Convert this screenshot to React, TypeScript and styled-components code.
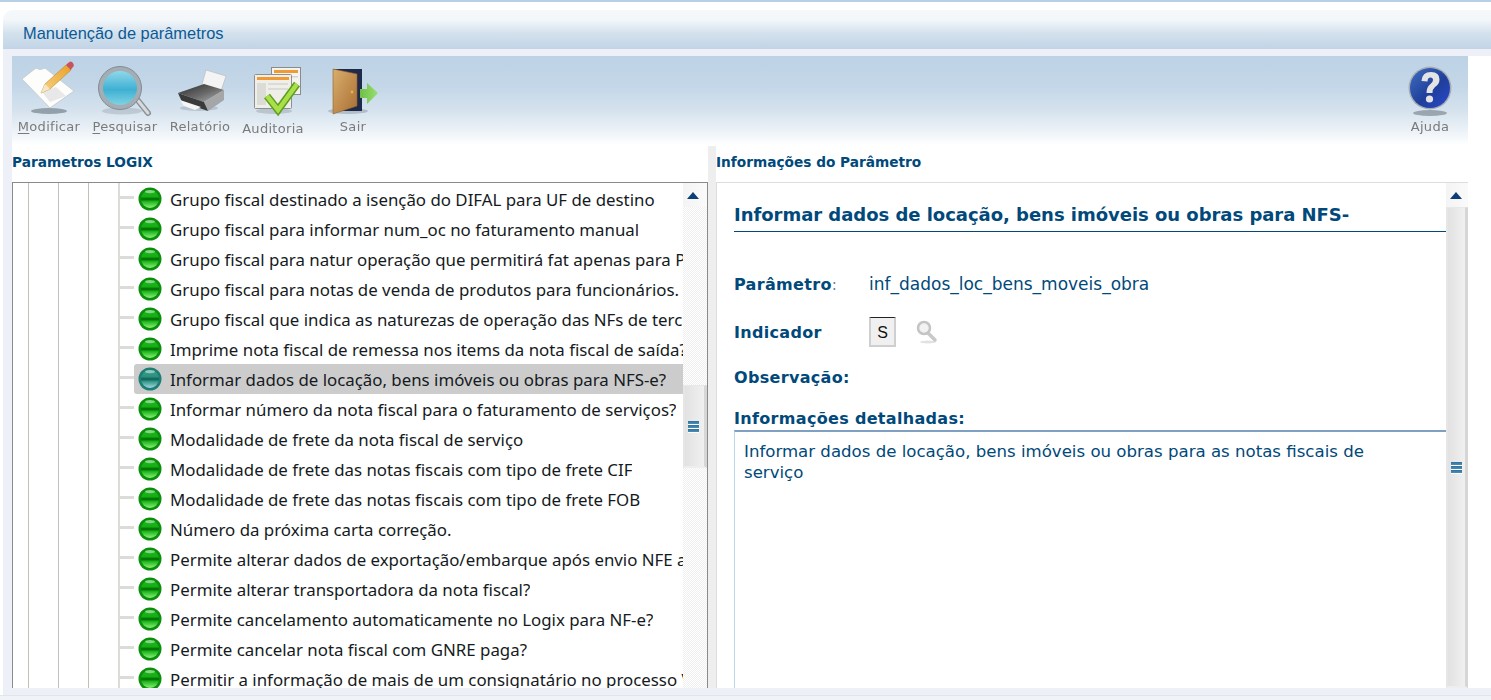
import React from 'react';
import styled, { createGlobalStyle } from 'styled-components';

const GlobalStyle = createGlobalStyle`
  html, body {
    margin: 0;
    padding: 0;
    background: #fff;
    overflow: hidden;
  }
  * { box-sizing: border-box; }
`;

const Page = styled.div`
  width: 1491px;
  height: 700px;
  display: flex;
  flex-direction: column;
  overflow: hidden;
  background: #fff;
  border-top: 2px solid #b8cfe6;
`;
const TitleBar = styled.div`
  height: 39px;
  margin: 8px 0 0 3px;
  padding: 8px 0 0 20px;
  display: flex;
  align-items: center;
  border-top-left-radius: 10px;
  background: linear-gradient(#f6f9fb 0%, #f3f7fa 25%, #d3e1ed 60%, #c1d4e6 100%);
  font: 16.4px "Liberation Sans", Arial, sans-serif;
  color: #0b5a96;
`;
const TitleGap = styled.div`
  height: 7px;
  margin-left: 3px;
  background: #edf1f7;
`;
const Body = styled.div`
  width: 1465px;
  height: 632px;
  margin-left: 3px;
  border-left: 9px solid #edf1f7;
  display: flex;
  flex-direction: column;
`;
const Toolbar = styled.div`
  height: 89px;
  flex: none;
  display: flex;
  background: linear-gradient(#bdd2e6 0%, #c4d7e8 35%, #d6e3ee 62%, #f0f5f9 88%, #ffffff 100%);
`;
const ToolButton = styled.div<{ $width: number; $push?: boolean }>`
  width: ${({ $width }) => $width}px;
  margin-left: ${({ $push }) => ($push ? 'auto' : '0')};
  margin-right: ${({ $push }) => ($push ? '8px' : '0')};
  display: flex;
  flex-direction: column;
  align-items: center;
`;
const ToolLabel = styled.span<{ $low?: boolean }>`
  margin-top: ${({ $low }) => ($low ? '3px' : '1px')};
  font: 13px "DejaVu Sans", Verdana, sans-serif;
  letter-spacing: 0.3px;
  line-height: 16px;
  white-space: nowrap;
  color: #7a7a7a;
  filter: blur(0.35px);
  u { text-underline-offset: 2px; }
`;
const Panels = styled.div`
  flex: 1;
  min-height: 0;
  display: grid;
  grid-template-columns: 696px 8px 752px;
`;
const Panel = styled.section`
  display: flex;
  flex-direction: column;
  min-height: 0;
`;
const Divider = styled.div`
  margin-top: 1px;
  background: #eeeeee;
`;
const PanelHeading = styled.h2`
  height: 37px;
  flex: none;
  margin: 0;
  padding-top: 9px;
  font: bold 13.7px/16px "DejaVu Sans", Verdana, sans-serif;
  color: #00497a;
`;
const TreeBox = styled.div`
  flex: 1;
  min-height: 0;
  display: flex;
  border: 1px solid #8a8a8a;
  border-bottom: none;
`;
const TreeList = styled.div`
  flex: 1;
  min-width: 0;
  overflow: hidden;
  padding-top: 1px;
  background-color: #fff;
  background-image:
    linear-gradient(#c4bfb9, #c4bfb9),
    linear-gradient(#c4bfb9, #c4bfb9),
    linear-gradient(#c4bfb9, #c4bfb9),
    linear-gradient(#dddbd8, #dddbd8);
  background-repeat: no-repeat;
  background-size: 1px 100%, 1px 100%, 1px 100%, 2px 100%;
  background-position: 15px 0, 45px 0, 75px 0, 105px 0;
`;
const TreeRow = styled.div`
  height: 30px;
  display: flex;
  align-items: center;
  padding-left: 107px;
`;
const Stub = styled.span`
  width: 14px;
  height: 3px;
  flex: none;
  margin-bottom: 4px;
  background: #dddbd8;
`;
const RowBody = styled.div<{ $selected?: boolean }>`
  flex: 1;
  min-width: 0;
  height: 30px;
  display: flex;
  align-items: center;
  gap: 8px;
  padding-left: 4px;
  border-radius: 3px 0 0 3px;
  background: ${({ $selected }) => ($selected ? '#cccccc' : 'transparent')};
`;
const RowText = styled.span`
  white-space: nowrap;
  overflow: hidden;
  padding-top: 1px;
  font: 16.85px/30px "Noto Sans", "Open Sans", sans-serif;
  color: #151a22;
`;
const ScrollBar = styled.div<{ $width: number }>`
  width: ${({ $width }) => $width}px;
  flex: none;
  display: flex;
  flex-direction: column;
  background: repeating-conic-gradient(#efefef 0 25%, #ffffff 0 50%) 0 0 / 2px 2px;
`;
const ScrollUp = styled.div`
  height: 24px;
  flex: none;
  padding-left: 4px;
  display: flex;
  align-items: center;
  background: linear-gradient(90deg, #f4f4f4, #fafafa);
`;
const UpArrow = styled.span`
  width: 0;
  height: 0;
  border-left: 6px solid transparent;
  border-right: 6px solid transparent;
  border-bottom: 7px solid #0b3f78;
`;
const ScrollGap = styled.div`
  height: 178px;
  flex: none;
`;
const Thumb = styled.div<{ $height?: number }>`
  height: ${({ $height }) => ($height ? `${$height}px` : 'auto')};
  flex: ${({ $height }) => ($height ? 'none' : '1')};
  display: flex;
  flex-direction: column;
  align-items: flex-start;
  padding-left: 3px;
  border: 1px solid #e4e4e4;
  border-width: 1px 3px 2px 2px;
  border-color: #e8e8e8 #d6d6d6 #eeeeee #e6e6e6;
  background: linear-gradient(90deg, #e2e2e2, #f1f0f0);
`;
const Grip = styled.span<{ $offset: number }>`
  width: 11px;
  height: 12px;
  margin-top: ${({ $offset }) => $offset}px;
  background: repeating-linear-gradient(#2f6f9c 0, #4a90b8 3px, #ffffff 3px, #ffffff 4px);
`;
const DetailBox = styled.div`
  flex: 1;
  min-height: 0;
  display: flex;
  border-top: 1px solid #dddddd;
  border-left: 1px solid #dddddd;
`;
const DetailPane = styled.div`
  flex: 1;
  min-width: 0;
  padding: 22px 0 0 17px;
  color: #00497a;
  font-family: "DejaVu Sans", Verdana, sans-serif;
`;
const DetailTitle = styled.h1`
  margin: 0;
  height: 27px;
  font-size: 18px;
  font-weight: bold;
  line-height: 20px;
  letter-spacing: -0.03px;
  white-space: nowrap;
  border-bottom: 1px solid #00497a;
`;
const FieldRow = styled.div<{ $top: number; $height: number }>`
  display: flex;
  align-items: center;
  height: ${({ $height }) => $height}px;
  margin-top: ${({ $top }) => $top}px;
`;
const FieldLabel = styled.span`
  font-size: 16px;
  font-weight: bold;
  letter-spacing: 0.32px;
  white-space: nowrap;
`;
const FixedLabel = styled(FieldLabel)`
  width: 135px;
  flex: none;
  small {
    font-size: 15px;
    font-weight: normal;
    color: #5f8aa8;
  }
`;
const FieldValue = styled.span`
  font-size: 17px;
  white-space: nowrap;
`;
const FlagInput = styled.div`
  width: 27px;
  height: 30px;
  display: flex;
  align-items: center;
  justify-content: center;
  padding-top: 2px;
  background: #f0f0f0;
  border: 2px solid #cfcfcf;
  border-top: 1px solid #222;
  font: 16px "Liberation Sans", Arial, sans-serif;
  color: #111;
`;
const LookupIcon = styled.svg`
  margin-left: 20px;
`;
const NotesBox = styled.div`
  height: 260px;
  margin-top: 2px;
  padding: 9px 30px 0 9px;
  border-top: 2px solid #7fa0c2;
  border-left: 1px solid #b9d9f2;
  font-size: 16.6px;
  line-height: 21px;
`;
const BottomStrip = styled.div`
  height: 7px;
  flex: none;
  margin-left: 3px;
  background: #edf1f7;
`;
const BottomEdge = styled.div`
  height: 5px;
  flex: none;
  background: #f0f3f7;
  border-top: 1px solid #e1e6ec;
`;

const rows = [
  'Grupo fiscal destinado a isenção do DIFAL para UF de destino',
  'Grupo fiscal para informar num_oc no faturamento manual',
  'Grupo fiscal para natur operação que permitirá fat apenas para P',
  'Grupo fiscal para notas de venda de produtos para funcionários.',
  'Grupo fiscal que indica as naturezas de operação das NFs de terc',
  'Imprime nota fiscal de remessa nos items da nota fiscal de saída?',
  'Informar dados de locação, bens imóveis ou obras para NFS-e?',
  'Informar número da nota fiscal para o faturamento de serviços?',
  'Modalidade de frete da nota fiscal de serviço',
  'Modalidade de frete das notas fiscais com tipo de frete CIF',
  'Modalidade de frete das notas fiscais com tipo de frete FOB',
  'Número da próxima carta correção.',
  'Permite alterar dados de exportação/embarque após envio NFE a',
  'Permite alterar transportadora da nota fiscal?',
  'Permite cancelamento automaticamente no Logix para NF-e?',
  'Permite cancelar nota fiscal com GNRE paga?',
  'Permitir a informação de mais de um consignatário no processo V',
];
const SELECTED_ROW = 6;

const StatusIcon: React.FC<{ selected?: boolean }> = ({ selected }) => {
  const id = selected ? 'status-sel' : 'status';
  const c = selected
    ? { ring: '#1d7f74', top: '#3f9f8c', mid: '#2a8f7e', band: '#136a60', low: '#a4d8e4' }
    : { ring: '#0a8f0a', top: '#22b422', mid: '#12b012', band: '#067406', low: '#8cf07c' };
  return (
    <svg width="24" height="24" viewBox="0 0 24 24" style={{ flex: 'none' }}>
      <defs>
        <linearGradient id={id} x1="0" y1="0" x2="0" y2="1">
          <stop offset="0" stopColor={c.top} />
          <stop offset="0.4" stopColor={c.mid} />
          <stop offset="0.44" stopColor={c.band} />
          <stop offset="0.56" stopColor={c.band} />
          <stop offset="0.6" stopColor={c.mid} />
          <stop offset="1" stopColor={c.low} />
        </linearGradient>
      </defs>
      <circle cx="12" cy="12" r="11.5" fill={c.ring} />
      <circle cx="12" cy="12" r="9" fill={`url(#${id})`} />
      <ellipse cx="12" cy="4.6" rx="5" ry="1.6" fill="#ffffff" opacity="0.45" />
    </svg>
  );
};

const ModifyIcon = () => (
  <svg width="74" height="62" viewBox="0 0 74 62">
    <defs>
      <linearGradient id="pencil" x1="0" y1="1" x2="1" y2="0">
        <stop offset="0" stopColor="#f7d58a" />
        <stop offset="1" stopColor="#eba024" />
      </linearGradient>
    </defs>
    <ellipse cx="37" cy="55" rx="18" ry="3" fill="#6f7c86" opacity="0.65" />
    <path d="M10 23 L24 12 Q28 15 33 12 L62 35 L38 52 Z" fill="#fdfdfb" stroke="#c9ced2" strokeWidth="1" />
    <path d="M30 36 L44 31 L54 40 L38 46 Z" fill="#d8dadb" opacity="0.6" />
    <path d="M29 37 L33 28 L54 9 L59 14 L38 33 Z" fill="url(#pencil)" stroke="#b98a33" strokeWidth="0.6" />
    <path d="M29 37 L33 28 L38 33 Z" fill="#f6e7c4" />
    <path d="M54 9 L56 7 Q59 4 61 7 Q63 10 60 12 L59 14 Z" fill="#c9525c" />
  </svg>
);

const SearchIcon = () => (
  <svg width="78" height="62" viewBox="0 0 78 62">
    <defs>
      <linearGradient id="lens" x1="0" y1="0" x2="0" y2="1">
        <stop offset="0" stopColor="#8fd8ea" />
        <stop offset="0.55" stopColor="#3fb0d2" />
        <stop offset="1" stopColor="#7fd2e4" />
      </linearGradient>
    </defs>
    <ellipse cx="36" cy="55" rx="20" ry="3.5" fill="#8b98a3" opacity="0.35" />
    <path d="M50 42 L62 57" stroke="#8a9096" strokeWidth="6" strokeLinecap="round" />
    <path d="M50 42 L62 57" stroke="#d6dadc" strokeWidth="3" strokeLinecap="round" />
    <circle cx="34" cy="32" r="21.5" fill="#a4adb3" />
    <circle cx="34" cy="32" r="21.5" fill="none" stroke="#828c93" strokeWidth="1" />
    <circle cx="34" cy="32" r="17" fill="url(#lens)" />
  </svg>
);

const PrinterIcon = () => (
  <svg width="72" height="62" viewBox="0 0 72 62">
    <defs>
      <linearGradient id="printer-top" x1="0" y1="0" x2="1" y2="1">
        <stop offset="0" stopColor="#2b2b2b" />
        <stop offset="0.55" stopColor="#6a6a6a" />
        <stop offset="1" stopColor="#b4b4b4" />
      </linearGradient>
    </defs>
    <ellipse cx="35" cy="52" rx="19" ry="3" fill="#8b98a3" opacity="0.4" />
    <path d="M42 14 L62 20 L56 38 L37 32 Z" fill="#f4f4f4" stroke="#b5b5b5" strokeWidth="0.6" />
    <path d="M14 37 L40 28 L60 34 L40 46 Z" fill="url(#printer-top)" />
    <path d="M40 46 L60 34 L60 44 L44 55 Z" fill="#a4a6a8" />
    <path d="M14 37 L40 46 L44 55 L18 46 Z" fill="#3a3a3a" />
    <path d="M16 44 L37 51 L31 54 L20 50 Z" fill="#f5f5f5" />
  </svg>
);

const AuditIcon = () => (
  <svg width="74" height="62" viewBox="0 0 74 62">
    <ellipse cx="38" cy="55" rx="18" ry="3" fill="#8b98a3" opacity="0.4" />
    <rect x="35.5" y="11.5" width="29" height="27" fill="#f4f3ef" stroke="#8b8b8b" />
    <rect x="38" y="14" width="24" height="3" fill="#ef9a32" />
    <rect x="38" y="20" width="24" height="1.5" fill="#d5d5d0" />
    <rect x="18.5" y="18.5" width="37" height="34" rx="1" fill="#efeee9" stroke="#8f8f8f" />
    <rect x="21" y="21" width="32" height="3" fill="#ef9a32" />
    <rect x="21" y="27" width="9" height="22" fill="#dcdcd6" />
    <rect x="32" y="27" width="20" height="2" fill="#dcdcd6" />
    <rect x="32" y="32" width="20" height="2" fill="#dcdcd6" />
    <path d="M31 40 L42 54 L61 28" fill="none" stroke="#5d9e1e" strokeWidth="7.5" strokeLinejoin="miter" />
    <path d="M31 40 L42 54 L61 28" fill="none" stroke="#a9e04a" strokeWidth="4.5" strokeLinejoin="miter" />
  </svg>
);

const ExitIcon = () => (
  <svg width="86" height="62" viewBox="0 0 86 62">
    <defs>
      <linearGradient id="door" x1="0" y1="0" x2="1" y2="1">
        <stop offset="0" stopColor="#d9ae6c" />
        <stop offset="1" stopColor="#a96f35" />
      </linearGradient>
      <linearGradient id="arrow" x1="0" y1="0" x2="1" y2="0">
        <stop offset="0" stopColor="#6fbf45" />
        <stop offset="1" stopColor="#9ade74" />
      </linearGradient>
    </defs>
    <ellipse cx="38" cy="55" rx="20" ry="3" fill="#8b98a3" opacity="0.5" />
    <rect x="23" y="13" width="29" height="42" fill="#1f2a4a" />
    <path d="M23 13 L47 18 L47 50 L23 58 Z" fill="url(#door)" stroke="#8f6030" strokeWidth="0.6" />
    <circle cx="42" cy="36" r="1.4" fill="#e9b53c" />
    <path d="M50 33 L57 33 L57 27 L68 37 L57 48 L57 42 L50 42 Z" fill="url(#arrow)" />
  </svg>
);

const HelpIcon = () => (
  <svg width="60" height="62" viewBox="0 0 60 62">
    <defs>
      <linearGradient id="help" x1="0" y1="0" x2="1" y2="1">
        <stop offset="0" stopColor="#3f6fc0" />
        <stop offset="0.55" stopColor="#1f3f9a" />
        <stop offset="1" stopColor="#2a48cf" />
      </linearGradient>
    </defs>
    <ellipse cx="30" cy="57" rx="17" ry="3" fill="#6f7c86" opacity="0.6" />
    <circle cx="30" cy="32" r="21.5" fill="#a6adb5" />
    <circle cx="30" cy="32" r="20" fill="url(#help)" />
    <path
      d="M21.5 25 Q22 16 31 16 Q39.5 16 39.5 23.5 Q39.5 28 35 31 Q32.5 33 32.5 37 L26.5 37 Q26.5 31 30 28.5 Q33 26.5 33 24 Q33 21.5 30.5 21.5 Q27.5 21.5 27.5 25.5 Z"
      fill="#e4e4e4"
    />
    <circle cx="29.5" cy="43" r="3.6" fill="#e4e4e4" />
  </svg>
);

export default function App() {
  return (
    <Page>
      <GlobalStyle />
      <TitleBar>Manutenção de parâmetros</TitleBar>
      <TitleGap />
      <Body>
        <Toolbar>
          <ToolButton $width={74}>
            <ModifyIcon />
            <ToolLabel><u>M</u>odificar</ToolLabel>
          </ToolButton>
          <ToolButton $width={78}>
            <SearchIcon />
            <ToolLabel><u>P</u>esquisar</ToolLabel>
          </ToolButton>
          <ToolButton $width={72}>
            <PrinterIcon />
            <ToolLabel>Relatório</ToolLabel>
          </ToolButton>
          <ToolButton $width={74}>
            <AuditIcon />
            <ToolLabel $low>Auditoria</ToolLabel>
          </ToolButton>
          <ToolButton $width={86}>
            <ExitIcon />
            <ToolLabel>Sair</ToolLabel>
          </ToolButton>
          <ToolButton $width={60} $push>
            <HelpIcon />
            <ToolLabel>Ajuda</ToolLabel>
          </ToolButton>
        </Toolbar>
        <Panels>
          <Panel>
            <PanelHeading>Parametros LOGIX</PanelHeading>
            <TreeBox>
              <TreeList>
                {rows.map((text, i) => (
                  <TreeRow key={text}>
                    <Stub />
                    <RowBody $selected={i === SELECTED_ROW}>
                      <StatusIcon selected={i === SELECTED_ROW} />
                      <RowText>{text}</RowText>
                    </RowBody>
                  </TreeRow>
                ))}
              </TreeList>
              <ScrollBar $width={24}>
                <ScrollUp><UpArrow /></ScrollUp>
                <ScrollGap />
                <Thumb $height={83}>
                  <Grip $offset={35} />
                </Thumb>
              </ScrollBar>
            </TreeBox>
          </Panel>
          <Divider />
          <Panel>
            <PanelHeading>Informações do Parâmetro</PanelHeading>
            <DetailBox>
              <DetailPane>
                <DetailTitle>Informar dados de locação, bens imóveis ou obras para NFS-</DetailTitle>
                <FieldRow $top={42} $height={20}>
                  <FixedLabel>Parâmetro<small>:</small></FixedLabel>
                  <FieldValue>inf_dados_loc_bens_moveis_obra</FieldValue>
                </FieldRow>
                <FieldRow $top={23} $height={30}>
                  <FixedLabel>Indicador</FixedLabel>
                  <FlagInput>S</FlagInput>
                  <LookupIcon width="22" height="24" viewBox="0 0 22 24">
                    <ellipse cx="12" cy="22" rx="8" ry="1.5" fill="#e2e2e2" />
                    <path d="M12 13 L19 20" stroke="#c9c9c9" strokeWidth="3.5" strokeLinecap="round" />
                    <circle cx="8" cy="8" r="6" fill="#f2f2f2" stroke="#c4c4c4" strokeWidth="2.5" />
                  </LookupIcon>
                </FieldRow>
                <FieldRow $top={20} $height={20}>
                  <FieldLabel>Observação:</FieldLabel>
                </FieldRow>
                <FieldRow $top={21} $height={20}>
                  <FieldLabel>Informações detalhadas:</FieldLabel>
                </FieldRow>
                <NotesBox>
                  Informar dados de locação, bens imóveis ou obras para as notas fiscais de serviço
                </NotesBox>
              </DetailPane>
              <ScrollBar $width={22}>
                <ScrollUp><UpArrow /></ScrollUp>
                <Thumb>
                  <Grip $offset={254} />
                </Thumb>
              </ScrollBar>
            </DetailBox>
          </Panel>
        </Panels>
      </Body>
      <BottomStrip />
      <BottomEdge />
    </Page>
  );
}
